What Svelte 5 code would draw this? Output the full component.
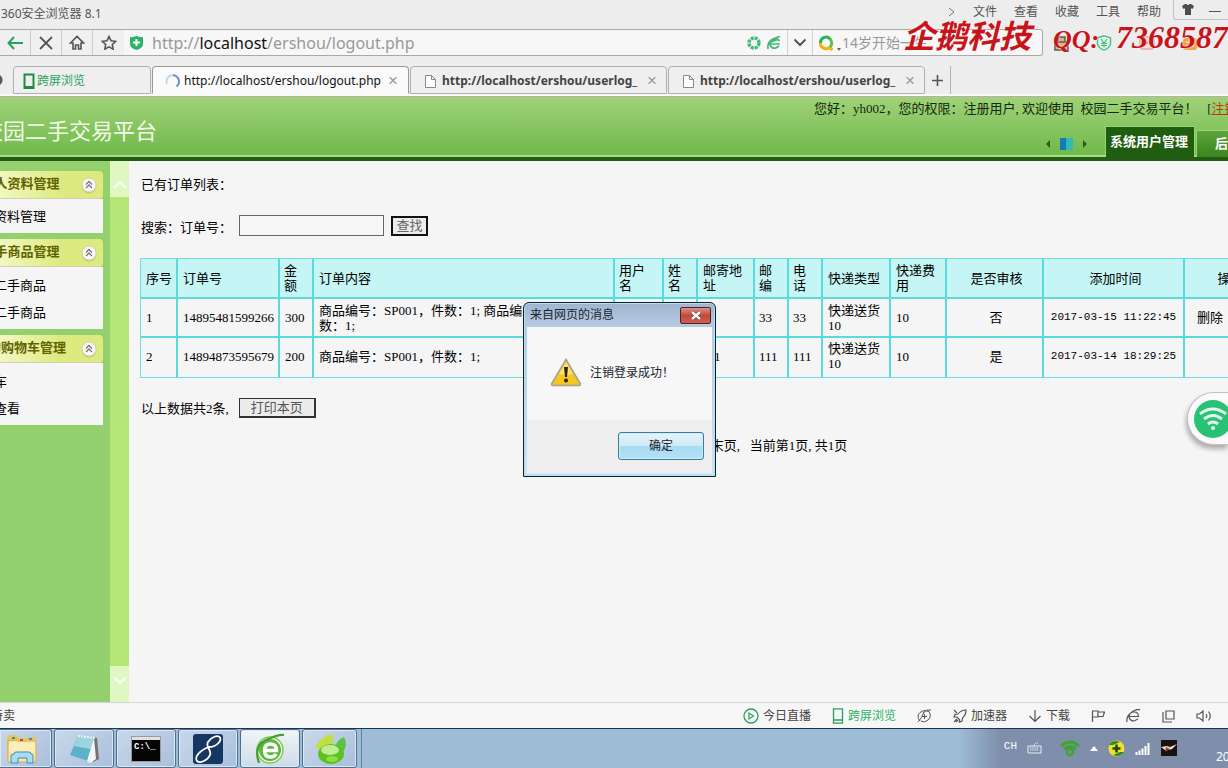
<script>
  const menus = ['文件', '查看', '收藏', '工具', '帮助'];
  const groups = [
    { title: '个人资料管理', items: ['个人资料管理'] },
    { title: '二手商品管理', items: ['添加二手商品', '查询二手商品'] },
    { title: '我的购物车管理', items: ['购物车', '订单查看'] }
  ];
  const widths = [37, 102, 34, 301, 49, 34, 57, 34, 34, 68, 56, 97, 141, 87];
  const heads = ['序号', '订单号', '金额', '订单内容', '用户名', '姓名', '邮寄地址', '邮编', '电话', '快递类型', '快递费用', '是否审核', '添加时间', '操作'];
  const rows = [
    ['1', '14895481599266', '300', '商品编号：SP001，件数：1; 商品编号：SP002，件数：1;', 'yh002', '33', '33', '33', '33', '快递送货10', '10', '否', '2017-03-15 11:22:45', '删除'],
    ['2', '14894873595679', '200', '商品编号：SP001，件数：1;', 'yh002', '111', '111', '111', '111', '快递送货10', '10', '是', '2017-03-14 18:29:25', '']
  ];
  let order = $state('');
  let open = $state(true);
</script>

<div class="screen">
  <header class="titlebar">
    <span class="app-name">360安全浏览器 8.1</span>
    <nav class="menus" aria-label="菜单">
      <svg width="8" height="12" viewBox="0 0 8 12"><path d="M1 2l5 4-5 4" fill="none" stroke="#777" /></svg>
      {#each menus as m}<button class="plain">{m}</button>{/each}
    </nav>
    <div class="winbtns">
      <button class="plain skin" aria-label="皮肤"><svg width="12" height="11" viewBox="0 0 12 11"><path d="M3 0h1.500q1.500 2 3 0H9l3 2-1.500 3L9 4.300V11H3V4.300L1.500 5 0 2z" fill="#4d4d4d" /></svg></button>
      <button class="plain min" aria-label="最小化"><svg width="12" height="11" viewBox="0 0 12 11"><path d="M0 7.500h12" stroke="#555" /></svg></button>
    </div>
  </header>

  <div class="addrrow">
    <div class="addr">
      <button class="tool" aria-label="后退"><svg width="16" height="14" viewBox="0 0 16 14"><path d="M7 1L1.500 7 7 13M2 7h14" fill="none" stroke="#27a35d" stroke-width="2" /></svg></button>
      <button class="tool" aria-label="停止"><svg width="14" height="14" viewBox="0 0 14 14"><path d="M1 1l12 12M13 1L1 13" stroke="#555" stroke-width="1.800" /></svg></button>
      <button class="tool" aria-label="主页"><svg width="16" height="15" viewBox="0 0 16 15"><path d="M1.500 8L8 1.500 14.500 8H12v6H9.500v-4h-3v4H4V8z" fill="none" stroke="#555" stroke-width="1.600" /></svg></button>
      <button class="tool" aria-label="收藏"><svg width="16" height="15" viewBox="0 0 16 15"><path d="M8 1.500l2 4.200 4.700.6-3.400 3.200.8 4.600L8 11.800l-4.100 2.300.8-4.600L1.300 6.300 6 5.700z" fill="none" stroke="#555" stroke-width="1.600" /></svg></button>
      <svg class="shield" width="13" height="14" viewBox="0 0 13 14"><path d="M0 1Q3 1.500 6.500 0 10 1.500 13 1v7q0 4-6.500 6Q0 12 0 8z" fill="#2bb466" /><path d="M6.500 3v7M3 6.500h7" stroke="#fff" stroke-width="2" /></svg>
      <div class="url">http://<b>localhost</b>/ershou/logout.php</div>
      <div class="addr-icons">
        <svg width="14" height="14" viewBox="0 0 14 14"><circle cx="7" cy="7" r="5" fill="none" stroke="#45b97a" stroke-width="3.400" stroke-dasharray="3 .93" /></svg>
        <svg width="14" height="14" viewBox="0 0 14 14"><path d="M3 8h10M12.500 5Q10 1.500 6 3.500T3 9q2 4 6 3l3-2M1 13Q0 6 6 3T13 1M4 6l8-3" fill="none" stroke="#45b97a" stroke-width="1.700" /></svg>
      </div>
      <button class="drop" aria-label="地址列表"><svg width="14" height="9" viewBox="0 0 14 9"><path d="M1.500 1.500L7 7l5.500-5.500" fill="none" stroke="#555" stroke-width="2" /></svg></button>
      <div class="search">
        <svg width="24" height="16" viewBox="0 0 24 16"><path d="M12.500 4.500A5.500 5.500 0 0 0 2.500 8" fill="none" stroke="#2fb15f" stroke-width="3" /><path d="M2.500 8a5.500 5.500 0 0 0 9 4.500l3 2.500" fill="none" stroke="#f3b21c" stroke-width="3" /><path d="M12 4a5.500 5.500 0 0 1 0 8" fill="none" stroke="#5fc04a" stroke-width="3" /><path d="M19 13h4l-2 3z" fill="#666" /></svg>
        <input aria-label="搜索" placeholder="14岁开始一生" />
      </div>
    </div>
    <div class="exts">
      <svg width="15" height="16" viewBox="0 0 15 16"><path d="M1 7h13v8H1zM4 7V2h7v5" fill="#d9b27b" stroke="#5b5b50" stroke-width="1.500" /></svg>
      <svg width="16" height="16" viewBox="0 0 16 16"><path d="M8 .8l6.500 2v6Q13.500 13 8 15.200 2.500 13 1.500 8.800v-6z" fill="#e4f6eb" stroke="#4abf80" stroke-width="1.400" /><path d="M5 4l3 4 3-4M8 8v4.500M5 8.300h6M5 10.500h6" fill="none" stroke="#4abf80" stroke-width="1.200" /></svg>
      <svg width="16" height="16" viewBox="0 0 16 16"><rect x="1" y="2" width="14" height="12" rx="2" fill="#f6dede" stroke="#d98b8b" /><path d="M5 5v6l5-3z" fill="#d98b8b" /></svg>
      <svg width="16" height="16" viewBox="0 0 16 16"><rect x="1" y="3" width="14" height="12" rx="3" fill="#f5a04c" /><path d="M4 7h8M4 11h8" stroke="#fff" /></svg>
    </div>
  </div>

  <div class="tabs">
    <span class="dot"></span>
    <button class="tab cross"><svg width="12" height="17" viewBox="0 0 12 17"><path d="M1.500 1.500h9v13.500h-9z" fill="none" stroke="#1e8a44" stroke-width="2" /><path d="M1 14.500h10" stroke="#1e8a44" stroke-width="3" /></svg>跨屏浏览</button>
    <button class="tab active"><svg width="15" height="15" viewBox="0 0 15 15"><path d="M2 10A6.300 6.300 0 0 1 8 1.200" fill="none" stroke="#c9d6e6" stroke-width="2" /><path d="M8 1.200A6.300 6.300 0 0 1 11.500 12.500" fill="none" stroke="#6e92bd" stroke-width="2" /></svg><span class="t">http://localhost/ershou/logout.php</span><i>×</i></button>
    {#each [1, 2] as n}
      <button class="tab idle"><svg width="11" height="13" viewBox="0 0 11 13"><path d="M.5.5h6l4 4v8H.5zM6.500.5v4h4" fill="#fff" stroke="#888" /></svg><span class="t">http://localhost/ershou/userlog_</span><i>×</i></button>
    {/each}
    <button class="plus" aria-label="新标签"><svg width="11" height="11" viewBox="0 0 11 11"><path d="M5.500 0v11M0 5.500h11" stroke="#555" stroke-width="1.600" /></svg></button>
  </div>

  <div class="banner">
    <h1>校园二手交易平台</h1>
    <div class="banner-right">
      <p>您好：yh002，您的权限：注册用户, 欢迎使用&nbsp; 校园二手交易平台！&nbsp; &nbsp;[<a href="#out">注销</a>]</p>
      <div class="modules">
        <svg class="pager" width="42" height="14" viewBox="0 0 42 14"><path d="M4 3v8L0 7z" fill="#2c5c17" /><path d="M14 1h6v12h-6z" fill="#0f7fb2" /><path d="M20 1h7v12h-7z" fill="#35b7b4" /><path d="M37 3v8l4-4z" fill="#2c5c17" /></svg>
        <a class="mod on" href="#sys">系统用户管理</a>
        <a class="mod" href="#back">后台管理</a>
      </div>
    </div>
  </div>

  <div class="body">
    <aside>
      <div class="groups">
        {#each groups as g}
          <section>
            <h2>{g.title}<svg width="16" height="17" viewBox="0 0 16 17"><circle cx="8" cy="9" r="7.500" fill="#b8b26b" opacity=".6" /><circle cx="8" cy="8" r="7" fill="#f8f8f6" stroke="#d4d0b0" /><path d="M5 7.500l3-3 3 3M5 11l3-3 3 3" fill="none" stroke="#777" stroke-width="1.300" /></svg></h2>
            <ul>{#each g.items as item}<li><a href="#item">{item}</a></li>{/each}</ul>
          </section>
        {/each}
      </div>
    </aside>
    <div class="strip">
      <button aria-label="向上"><svg width="14" height="9" viewBox="0 0 14 9"><path d="M1 8l6-6 6 6" fill="none" stroke="#f6fcee" stroke-width="2.500" /></svg></button>
      <button aria-label="向下"><svg width="14" height="9" viewBox="0 0 14 9"><path d="M1 1l6 6 6-6" fill="none" stroke="#f6fcee" stroke-width="2.500" /></svg></button>
    </div>
    <main>
      <div class="sheet">
        <p class="line">已有订单列表：</p>
        <form class="find" onsubmit={(e) => e.preventDefault()}>
          <label for="order">搜索：订单号：</label>
          <input id="order" bind:value={order} />
          <button class="go">查找</button>
        </form>
        <table>
          <colgroup>{#each widths as w}<col style="width: {w}px" />{/each}</colgroup>
          <thead><tr>{#each heads as h}<th class:narrow={['金额', '用户名', '姓名', '邮编', '电话'].includes(h)}>{h}</th>{/each}</tr></thead>
          <tbody>
            {#each rows as r}<tr>{#each r as c}<td>{c}</td>{/each}</tr>{/each}
          </tbody>
        </table>
        <div class="sum">以上数据共2条, <button class="print">打印本页</button></div>
        <p class="paging">首页,&nbsp; 上一页,&nbsp; 下一页,&nbsp; 末页,&nbsp;&nbsp; 当前第1页, 共1页</p>
      </div>
    </main>
  </div>

  <footer class="status">
    <span class="deal">特卖</span>
    <div class="sitems">
      <button class="plain"><svg width="16" height="16" viewBox="0 0 16 16"><circle cx="8" cy="8" r="7" fill="none" stroke="#2aa05c" stroke-width="1.300" /><path d="M6 5v6l4.500-3z" fill="none" stroke="#2aa05c" stroke-width="1.200" /></svg>今日直播</button>
      <button class="plain green"><svg width="12" height="16" viewBox="0 0 12 16"><path d="M1.500.8h9v14.400h-9zM1.500 12h9" fill="none" stroke="#2aa05c" stroke-width="1.300" /></svg>跨屏浏览</button>
      <button class="plain" aria-label="清理"><svg width="15" height="14" viewBox="0 0 15 14"><path d="M3 12Q-1 7 3 3.500T12 2.500q3 5-1 8.500t-7 1M1 13Q5 9 7 3M5 7.500h5M7.500 5v5M14 1Q9 0 6 4" fill="none" stroke="#555" /></svg></button>
      <button class="plain"><svg width="14" height="14" viewBox="0 0 14 14"><path d="M13 1Q8 1 5 5L2 5.500 1 8l3 0 2.500 2.500V13L9 12l.5-3Q13 6 13 1zM1 1l3 3M1 13l3-3M3 13l2-2" fill="none" stroke="#555" stroke-width="1.200" /></svg>加速器</button>
      <button class="plain"><svg width="14" height="14" viewBox="0 0 14 14"><path d="M7 1v11M1.500 7L7 12.500 12.500 7" fill="none" stroke="#555" stroke-width="1.200" /></svg>下载</button>
      <button class="plain" aria-label="标记"><svg width="14" height="14" viewBox="0 0 14 14"><path d="M1.500 13V2H7v6H1.500M7 3h6.500l-1.500 4.500H7" fill="none" stroke="#555" stroke-width="1.200" /></svg></button>
      <button class="plain" aria-label="内核"><svg width="15" height="14" viewBox="0 0 15 14"><path d="M3 7.500h9.500Q12.500 3 8 3T3 8q1 4 5 4l4-2M1 13Q0 7 6 3T14 1" fill="none" stroke="#555" stroke-width="1.200" /></svg></button>
      <button class="plain" aria-label="窗口"><svg width="13" height="14" viewBox="0 0 13 14"><path d="M4 2h8v8H4zM1 3v10h9" fill="none" stroke="#555" stroke-width="1.200" /></svg></button>
      <button class="plain" aria-label="声音"><svg width="16" height="14" viewBox="0 0 16 14"><path d="M1 5h2.500L7 2v10L3.500 9H1zM10 5q1.500 2 0 4M12.500 2.500q3.500 4.500 0 9" fill="none" stroke="#555" stroke-width="1.200" /></svg></button>
    </div>
  </footer>

  <div class="taskbar">
    <div class="apps">
      <button aria-label="资源管理器" class="first"><svg width="32" height="32" viewBox="0 0 32 32"><path d="M1 4l3-2h7l2 3h8l2-1h7v24H1z" fill="#e6c36a" /><path d="M2 8l9-1 3 3h16v19H2z" fill="#f9e6a4" stroke="#d6ac4c" /><path d="M3 9h26v10H3z" fill="#fbedb8" /><path d="M6 4h3v2H6z" fill="#3a9b57" /><path d="M14 6h3v2h-3z" fill="#b54c3c" /><path d="M23 5h3v2h-3z" fill="#418cc9" /><path d="M8 21q0-2 2-2h13q2 0 2 2l2 1v8h-6v-5h-9v5H5v-8z" fill="#a8dcf4" stroke="#3c8cc0" /></svg></button>
      <button aria-label="记事本"><svg width="32" height="30" viewBox="0 0 32 30"><path d="M26 3l3 1 2 21-6 3z" fill="#77736c" /><path d="M10 2l16 2-6 23-18-6z" fill="#5fb0ca" /><path d="M10 2l16 2-3 11L6 12z" fill="#9bd5e2" /><path d="M26 4l2 21-6 4-3-2z" fill="#f3f6f6" /><path d="M10 2l17 2" stroke="#f2f2f2" stroke-width="2" stroke-dasharray="2 1" /></svg></button>
      <button aria-label="命令行"><svg width="30" height="26" viewBox="0 0 30 26"><path d="M0 0h30v26H0z" fill="#9a9a9a" /><path d="M1 1h28v3H1z" fill="#e1e1e1" /><path d="M1 4h28v21H1z" fill="#050505" /><text x="3" y="13" fill="#fff" font-family="Liberation Mono" font-size="9" font-weight="bold">C:\_</text></svg></button>
      <button aria-label="笔记"><svg width="32" height="32" viewBox="0 0 32 32"><rect x="1" y="1" width="30" height="30" rx="3" fill="#173763" /><path d="M17 14C24 14 30 8 28 4.500C26 1.500 19 4 16 9C13 14 20 17 18 22C16 27 8 31 5 28C2 24 8 17 17 14z" fill="none" stroke="#fff" stroke-width="1.800" /></svg></button>
      <button aria-label="浏览器" class="lit"><svg width="32" height="32" viewBox="0 0 32 32"><circle cx="16" cy="17" r="13" fill="#f5faf0" stroke="#7fcb5b" stroke-width="1.500" /><circle cx="16" cy="17" r="11" fill="#5cb83a" /><path d="M10.500 17.500h12Q22.500 11 16.500 11T10.500 17.500q0 6.500 6 6.500 4 0 5.500-3" fill="none" stroke="#fff" stroke-width="3.500" /><path d="M5 30Q-1 13 12 7T30 2" fill="none" stroke="#4a9a35" stroke-width="2.200" /></svg></button>
      <button aria-label="助手" class="last"><svg width="34" height="32" viewBox="0 0 34 32"><path d="M2 14Q8 3 19 1q4 9-2 15Q8 18 2 14z" fill="#c3dd45" /><path d="M22 15Q24 6 31 4q5 10-4 18z" fill="#62c04a" /><ellipse cx="18" cy="21" rx="13" ry="10" fill="#5bc21f" /><ellipse cx="17" cy="17" rx="9" ry="5" fill="#c0ec92" /><ellipse cx="19" cy="26" rx="6" ry="3" fill="#8be03f" /></svg></button>
    </div>
    <div class="tray">
      <span class="ch">CH</span>
      <svg width="15" height="12" viewBox="0 0 15 12"><path d="M1 4h13v7H1z" fill="none" stroke="#e9edf2" /><path d="M3 6h9M3 8h9M7 4Q7 1 11 1" fill="none" stroke="#e9edf2" stroke-dasharray="1.500 .7" /></svg>
      <svg class="wf" width="20" height="18" viewBox="0 0 20 18"><path d="M1 7q9-8 18 0M4 10q6-5 12 0" fill="none" stroke="#3ea52e" stroke-width="3" /><circle cx="10" cy="13" r="3" fill="none" stroke="#3ea52e" stroke-width="2.500" /></svg>
      <svg width="8" height="5" viewBox="0 0 8 5"><path d="M0 5l4-5 4 5z" fill="#fff" /></svg>
      <svg width="17" height="17" viewBox="0 0 17 17"><circle cx="8.500" cy="8.500" r="8" fill="#eee12b" /><path d="M1 5Q5-1 12 2L5 5zM16 12Q12 18 5 15l7-3z" fill="#2d8a2c" /><path d="M8.500 4.500v8M4.500 8.500h8" stroke="#1e4715" stroke-width="2.500" /></svg>
      <svg width="16" height="13" viewBox="0 0 16 13"><path d="M1.500 13v-3M4.500 13V8.500M7.500 13V6.500M10.500 13V4M13.500 13V1" stroke="#fff" stroke-width="2" /></svg>
      <svg width="16" height="16" viewBox="0 0 16 16"><path d="M0 0h16v16H0z" fill="#17130f" /><path d="M0 7l6-1 3 1 7-3-5 5-4 1-3 0z" fill="#e6ddd6" /><path d="M5 7l4 2-5 3z" fill="#a83a2c" /></svg>
    </div>
    <span class="clock">2017</span>
  </div>

  <div class="wifi"><svg width="40" height="40" viewBox="0 0 40 40"><circle cx="20" cy="20" r="19" fill="#27c274" /><path d="M7 15q13-10 26 0M11 20q9-7 18 0M15 25q5-4 10 0" fill="none" stroke="#e2fbee" stroke-width="3" /><circle cx="20" cy="29" r="2" fill="#e2fbee" /></svg></div>

  <div class="mark"><span>企鹅科技</span><span class="qq">QQ:</span><span>7368587</span></div>

  {#if open}
    <div class="dialog" role="dialog" aria-label="来自网页的消息">
      <div class="dhead">来自网页的消息<button aria-label="关闭" onclick={() => (open = false)}><svg width="12" height="9" viewBox="0 0 12 9"><path d="M2 1l8 7M10 1L2 8" stroke="#6b3030" stroke-width="3.600" /><path d="M2 1l8 7M10 1L2 8" stroke="#fff" stroke-width="2.400" /></svg></button></div>
      <div class="dbody">
        <svg width="32" height="29" viewBox="0 0 32 29"><path d="M16 1.500L30.500 26q0 1.500-1.500 1.500H3Q1.500 27.500 1.500 26z" fill="#f6c722" stroke="#a4a092" stroke-width="1.500" /><path d="M16 4l7 12q-9 1-14 0z" fill="#fbe36b" /><path d="M14 9h4l-1 10h-2z" fill="#2b250e" /><circle cx="16" cy="22.500" r="2" fill="#2b250e" /></svg>
        <span>注销登录成功！</span>
      </div>
      <div class="dfoot"><button onclick={() => (open = false)}>确定</button></div>
    </div>
  {/if}
</div>

<style>
  :global(body) { margin: 0; background: #f5f5f5; }
  .screen, .screen * { box-sizing: border-box; }
  .screen { position: relative; display: flex; flex-direction: column; height: 100vh; overflow: hidden; background: #ededed; color: #111; font: 12px/16px "Noto Sans", "Noto Sans CJK SC", sans-serif; }
  button, input { font: inherit; color: inherit; }
  button { border: 0; background: none; padding: 0; }
  svg { display: block; flex: none; }
  h1, h2, p, ul { margin: 0; padding: 0; list-style: none; font-weight: normal; }
  a { color: inherit; text-decoration: none; }

  .titlebar { display: flex; flex: none; height: 29px; color: #555; }
  .app-name { padding: 6px 0 0 1px; }
  .menus { display: flex; gap: 17px; align-items: center; height: 24px; margin-left: auto; padding-right: 12px; }
  .winbtns { display: flex; height: 20px; border: 1px solid #c0c0c0; border-width: 0 0 1px 1px; border-radius: 0 0 0 3px; }
  .winbtns button { display: flex; justify-content: center; width: 27px; padding-top: 4px; }

  .addrrow { display: flex; flex: none; height: 27px; }
  .addr { display: flex; flex: 1; align-items: center; border: 1px solid #a9a9a9; border-left: 0; border-radius: 0 3px 3px 0; background: #f7f7f7; }
  .tool { display: flex; align-items: center; justify-content: center; width: 31px; height: 25px; border-right: 1px solid #ccc; background: #f0f0f0; }
  .tool:nth-child(4) { border-right: 0; }
  .shield { margin-left: 6px; }
  .url { flex: 1; margin-left: 9px; font-size: 16px; color: #999; white-space: nowrap; }
  .url b { font-weight: normal; color: #111; }
  .addr-icons { display: flex; gap: 6px; padding-right: 6px; }
  .drop { display: flex; align-items: center; justify-content: center; width: 26px; height: 25px; border: 1px solid #d0d0d0; border-width: 0 1px; }
  .search { display: flex; align-items: center; width: 229px; padding-left: 5px; }
  .search input { width: 180px; border: 0; padding: 0; background: none; outline: 0; font-size: 14px; }
  .search input::placeholder { color: #999; opacity: 1; }
  .exts { display: flex; gap: 27px; align-items: center; padding: 0 30px 0 11px; }

  .tabs { display: flex; flex: none; align-items: flex-end; height: 41px; padding-bottom: 2px; border-bottom: 1px solid #b9b1a6; background: linear-gradient(#ededed 38px, #fafafa 38px); }
  .dot { width: 13px; height: 14px; margin-bottom: 7px; background: radial-gradient(circle at -3px 7px, #555 5px, transparent 6px); }
  .tab { display: flex; align-items: center; height: 28px; border: 1px solid #b0b0b0; border-radius: 4px 4px 0 0; padding-top: 2px; background: #efefef; white-space: nowrap; }
  .tab i { margin-left: -3px; font: 17px/16px "Liberation Sans", sans-serif; color: #999; }
  .cross { width: 138px; gap: 2px; padding-left: 9px; color: #27a35d; }
  .active { width: 257px; margin-left: 1px; padding-left: 12px; gap: 4px; border-color: #999; border-bottom-color: #fafafa; background: #fafafa; }
  .active .t { width: 203px; overflow: hidden; text-align: left; color: #111; }
  .idle { width: 257px; margin-left: 1px; padding-left: 14px; gap: 6px; color: #444; }
  .idle .t { width: 202px; overflow: hidden; text-align: left; font-weight: bold; }
  .plus { display: flex; align-items: center; justify-content: center; width: 26px; height: 28px; border-right: 1px solid #b0b0b0; }

  .banner { display: flex; flex: none; justify-content: space-between; height: 64px; border-bottom: 4px solid #215c12; background: linear-gradient(#a0d279, #73bb4e 54px, #73bb4e 58px, #a8dc86 58px); font-family: "Liberation Serif", "Noto Sans CJK SC", serif; font-size: 13px; }
  h1 { margin-left: -19px; padding-top: 21px; font-size: 22px; line-height: 28px; color: #f3fbe9; white-space: nowrap; }
  .banner-right { width: 414px; overflow: hidden; white-space: nowrap; }
  .banner-right p { padding-top: 4px; color: #14280c; }
  .banner-right p a { color: #c0390c; text-decoration: underline; }
  .modules { display: flex; align-items: flex-end; height: 40px; padding-left: 232px; }
  .pager { margin: 0 17px 6px 0; }
  .mod { flex: none; padding: 6px 3px; border: 1px solid #9bd377; border-bottom: 0; background: linear-gradient(#5ca63a, #3b8420); line-height: 18px; color: #fff; font-weight: bold; }
  .mod.on { width: 90px; margin-right: 1px; padding: 6px 4px; background: #1f5d10; }
  .mod:last-child { width: 100px; padding: 4px 0 4px 18px; }

  .body { display: flex; flex: 1; min-height: 0; background: #f5f5f5; font-family: "Liberation Serif", "Noto Sans CJK SC", serif; font-size: 13px; line-height: 15px; color: #000; }
  aside { flex: none; width: 110px; overflow: hidden; background: #94d06d; }
  .groups { display: flex; flex-direction: column; gap: 6px; width: 172px; margin-left: -62px; padding: 10px 7px 0 0; }
  h2 { position: relative; height: 28px; border-radius: 4px; background: linear-gradient(90deg, #f3f8c5 35%, #dcea80 75%); border-bottom: 1px solid #d2d0b2; font-size: 13px; line-height: 26px; font-weight: bold; text-align: center; color: #5f6300; }
  h2 svg { position: absolute; right: 6px; top: 6px; }
  section ul { display: flex; flex-direction: column; gap: 12px; padding: 10px 0 9px 30px; background: #f5f5f5; }
  section:nth-child(n + 2) ul { padding: 11px 0 9px 30px; }
  .strip { display: flex; flex: none; flex-direction: column; justify-content: space-between; width: 19px; background: #b5e574; }
  .strip button { display: flex; align-items: center; justify-content: center; height: 36px; background: #e0f6c3; }
  .strip button:last-child { padding-bottom: 8px; }
  .strip button:first-child { padding-top: 10px; }
  main { flex: 1; min-width: 0; overflow: hidden; padding: 16px 0 0 11px; }
  .sheet { width: 1133px; }
  .line { padding-left: 1px; }
  .find { display: flex; align-items: center; margin: 23px 0 22px; padding-left: 1px; }
  .find label { width: 98px; padding-top: 3px; }
  .find input { width: 145px; height: 21px; border: 1px solid #666; padding: 0 3px; background: #f7f7f7; }
  .go { width: 37px; height: 20px; margin-left: 7px; border: 2px solid #111; background: #ececec; color: #666; line-height: 14px; }
  table { width: 1133px; table-layout: fixed; border: 1px solid #6fdde0; border-collapse: separate; border-spacing: 0; }
  th, td { height: 39px; padding: 0 2px 0 5px; border: 0 solid #5adada; border-right-width: 2px; border-bottom-width: 2px; text-align: left; font-weight: normal; overflow-wrap: anywhere; }
  th { height: 40px; padding-right: 1px; background: #c5f6f5; }
  th.narrow { padding: 0 12px 0 4px; }
  tbody tr:last-child td { padding-bottom: 3px; border-bottom-width: 0; }
  th:last-child, td:last-child { border-right-width: 0; }
  td:last-child { padding-left: 12px; }
  th:nth-child(n + 12), td:nth-child(12) { text-align: center; }
  td:nth-child(13) { text-align: center; padding: 0; font-family: "Liberation Mono", monospace; font-size: 11px; }
  td:nth-child(n + 5):nth-child(-n + 9) { padding-left: 4px; }
  .sum { display: flex; align-items: center; margin-top: 20px; padding-left: 1px; gap: 10px; }
  .print { width: 77px; height: 20px; border: 2px solid #333; border-width: 1px 2px 2px 1px; background: #ececec; color: #555; }
  .paging { margin-top: 20px; padding-left: 12px; text-align: center; }

  .status { display: flex; flex: none; align-items: center; height: 26px; border-top: 1px solid #d4d4d4; background: #f6f6f6; color: #444; }
  .deal { margin-left: -9px; }
  .sitems { display: flex; gap: 21px; margin-left: auto; padding-right: 16px; }
  .sitems button { display: flex; align-items: center; gap: 4px; }
  .green { color: #2fb368; }

  .taskbar { display: flex; flex: none; height: 40px; overflow: hidden; border-top: 1px solid #1f3350; background: linear-gradient(90deg, #9dbdd6 958px, #7f8fab 1000px); }
  .apps { display: flex; gap: 2px; border-right: 1px solid #5f7f9c; padding-right: 4px; }
  .apps button { display: flex; align-items: center; justify-content: center; width: 60px; height: 39px; border: 1px solid #4f6f90; border-radius: 3px; background: linear-gradient(135deg, #c9d8ea, #aabfdc); box-shadow: inset 0 0 0 1px #dce8f4; }
  .apps .first { width: 52px; padding-right: 8px; border-left: 0; border-radius: 0 3px 3px 0; }
  .apps .last { width: 55px; }
  .apps .lit { background: linear-gradient(#f0f5f8, #cddbe8); }
  .tray { display: flex; align-items: center; gap: 10px; height: 38px; margin-left: auto; color: #fff; }
  .ch { margin-bottom: 4px; font: 11px/14px "Liberation Mono", monospace; }
  .wf { margin-left: 8px; }
  .clock { width: 12px; margin-left: 39px; padding-top: 20px; overflow: hidden; font-size: 12px; color: #fff; }

  .wifi { position: absolute; right: 0; top: 392px; width: 41px; height: 53px; padding: 6px 0 0 5px; overflow: hidden; border: 1px solid #c9bfc1; border-right: 0; border-radius: 27px 0 0 27px; background: #fafafa; box-shadow: -1px 4px 5px rgba(0, 0, 0, .3); }
  .mark { position: absolute; left: 903px; right: 0; top: 16px; display: flex; align-items: baseline; overflow: hidden; white-space: nowrap; font: italic bold 32px/42px "Liberation Serif", "Noto Sans CJK SC", serif; color: #c8151b; text-shadow: 0 0 2px #fff; }
  .qq { width: 66px; margin-left: 22px; font-size: 26px; }

  .dialog { position: absolute; left: 523px; top: 302px; display: flex; flex-direction: column; width: 193px; height: 175px; padding: 0 3px 3px; border: 1px solid #10202c; border-radius: 6px 6px 0 0; background: linear-gradient(#9fb4cf, #b7cbe0 24px, #cfe3f0); box-shadow: inset 0 0 0 1px #a8e4f2; color: #1c2430; }
  .dhead { display: flex; justify-content: space-between; height: 24px; padding: 4px 1px 0 3px; }
  .dhead button { display: flex; align-items: center; justify-content: center; width: 31px; height: 17px; border: 1px solid #5b1e22; border-radius: 2px; background: linear-gradient(#d99286, #c04a3b 50%, #cc6052); }
  .dbody { display: flex; flex: 1; align-items: center; gap: 8px; padding: 0 0 2px 23px; background: #f7f7f7; }
  .dfoot { display: flex; justify-content: flex-end; height: 53px; padding: 12px 8px; background: #eee; }
  .dfoot button { width: 86px; height: 28px; border: 1px solid #3d7ca0; border-radius: 3px; background: linear-gradient(#e6f4fb, #cfe9f7 50%, #a9daf2 52%, #b4e2f6); box-shadow: inset 0 0 0 1px #c8eefb; }
</style>
